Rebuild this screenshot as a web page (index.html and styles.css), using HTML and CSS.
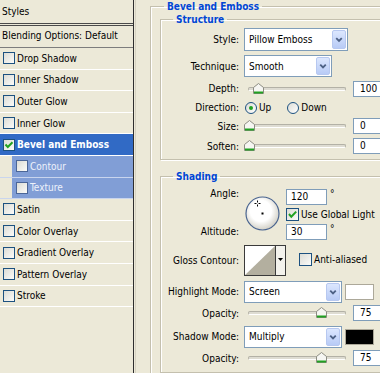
FILE: index.html
```html
<!DOCTYPE html>
<html lang="en">

<head>
    <meta charset="UTF-8">
    <title>Layer Style - Bevel and Emboss</title>
    <link rel="stylesheet" href="styles.css">
</head>

<body>
    <div class="dialog">
        <div class="styles-panel">
            <div class="panel-title">Styles</div>
            <div class="panel-blend">Blending Options: Default</div>
            <div class="panel-item"><span class="cb"></span>Drop Shadow</div>
            <div class="panel-item"><span class="cb"></span>Inner Shadow</div>
            <div class="panel-item"><span class="cb"></span>Outer Glow</div>
            <div class="panel-item"><span class="cb"></span>Inner Glow</div>
            <div class="panel-item selected">
                <span class="cb"><svg width="10" height="10" viewBox="0 0 10 10"><path d="M1.5 4.5 3.8 7 8.5 2.2" fill="none" stroke="#21a121" stroke-width="2"/></svg></span>Bevel and Emboss
            </div>
            <div class="panel-item sub"><span class="cb"></span>Contour</div>
            <div class="panel-item sub"><span class="cb"></span>Texture</div>
            <div class="panel-item"><span class="cb"></span>Satin</div>
            <div class="panel-item"><span class="cb"></span>Color Overlay</div>
            <div class="panel-item"><span class="cb"></span>Gradient Overlay</div>
            <div class="panel-item"><span class="cb"></span>Pattern Overlay</div>
            <div class="panel-item"><span class="cb"></span>Stroke</div>
        </div>

        <div class="options">
            <fieldset class="group outer">
                <legend>Bevel and Emboss</legend>

                <fieldset class="group inner structure">
                    <legend>Structure</legend>
                    <div class="row r-style">
                        <span class="label">Style:</span>
                        <div class="select w-style"><span>Pillow Emboss</span><span class="drop"><svg width="13" height="19" viewBox="0 0 13 19"><path d="M3.5 8 6.5 11 9.5 8" fill="none" stroke="#4d6185" stroke-width="2"/></svg></span></div>
                    </div>
                    <div class="row r-tech">
                        <span class="label">Technique:</span>
                        <div class="select w-tech"><span>Smooth</span><span class="drop"><svg width="13" height="18" viewBox="0 0 13 18"><path d="M3.5 7.5 6.5 10.5 9.5 7.5" fill="none" stroke="#4d6185" stroke-width="2"/></svg></span></div>
                    </div>
                    <div class="row r-slide">
                        <span class="label">Depth:</span>
                        <div class="slider"><div class="track"><svg class="thumb" style="left: 10%" width="11" height="11" viewBox="0 0 11 11"><path d="M0.5 4.5 5.5 0.5 10.5 4.5V10.5H0.5Z" fill="#f6f6f2" stroke="#8c8c82"/><path d="M1 9.5H10" stroke="#21a121" stroke-width="2"/></svg></div></div>
                        <span class="field num">100</span>
                    </div>
                    <div class="row r-dir">
                        <span class="label">Direction:</span>
                        <div class="radios">
                            <span class="opt"><span class="radio on"></span>Up</span>
                            <span class="opt"><span class="radio"></span>Down</span>
                        </div>
                    </div>
                    <div class="row r-size">
                        <span class="label">Size:</span>
                        <div class="slider"><div class="track"><svg class="thumb" style="left: 0%" width="11" height="11" viewBox="0 0 11 11"><path d="M0.5 4.5 5.5 0.5 10.5 4.5V10.5H0.5Z" fill="#f6f6f2" stroke="#8c8c82"/><path d="M1 9.5H10" stroke="#21a121" stroke-width="2"/></svg></div></div>
                        <span class="field num">0</span>
                    </div>
                    <div class="row r-soften">
                        <span class="label">Soften:</span>
                        <div class="slider"><div class="track"><svg class="thumb" style="left: 0%" width="11" height="11" viewBox="0 0 11 11"><path d="M0.5 4.5 5.5 0.5 10.5 4.5V10.5H0.5Z" fill="#f6f6f2" stroke="#8c8c82"/><path d="M1 9.5H10" stroke="#21a121" stroke-width="2"/></svg></div></div>
                        <span class="field num">0</span>
                    </div>
                </fieldset>

                <fieldset class="group inner shading">
                    <legend>Shading</legend>
                    <div class="angle-block">
                        <div class="angle-labels">
                            <span>Angle:</span>
                            <span>Altitude:</span>
                        </div>
                        <svg class="dial" width="35" height="35" viewBox="0 0 35 35">
                            <defs>
                                <radialGradient id="dial-fill" cx="45%" cy="42%" r="58%">
                                    <stop offset="0.55" stop-color="#ffffff"/>
                                    <stop offset="1" stop-color="#d2d0c6"/>
                                </radialGradient>
                            </defs>
                            <circle cx="17.5" cy="17.5" r="16.5" fill="url(#dial-fill)" stroke="#4a6590" stroke-width="1.2"/>
                            <path d="M9.5 7.5H11.5M13.5 7.5H15.5M12.5 4.5V6.5M12.5 8.5V10.5" stroke="#000" stroke-width="1"/>
                            <rect x="16.5" y="16.5" width="2" height="2" fill="#000"/>
                        </svg>
                        <div class="angle-fields">
                            <div class="field-line"><span class="field angle">120</span><span class="deg">°</span></div>
                            <div class="check-line"><span class="cb big"><svg width="11" height="11" viewBox="0 0 11 11"><path d="M2 5 4.3 7.8 9.2 2.6" fill="none" stroke="#21a121" stroke-width="2"/></svg></span>Use Global Light</div>
                            <div class="field-line"><span class="field angle">30</span><span class="deg">°</span></div>
                        </div>
                    </div>
                    <div class="row r-gloss">
                        <span class="label">Gloss Contour:</span>
                        <svg class="contour" width="42" height="31" viewBox="0 0 42 31">
                            <rect x="0.5" y="0.5" width="41" height="30" fill="#fff" stroke="#3a3a3a"/>
                            <polygon points="1,30 31,1 31,30" fill="#b3af9f"/>
                            <rect x="31" y="1" width="10" height="29" fill="#f3f2ec"/>
                            <path d="M31.5 1V30" stroke="#3a3a3a"/>
                            <polygon points="34,13 39,13 36.5,16" fill="#000"/>
                        </svg>
                        <span class="opt aa"><span class="cb big"></span>Anti-aliased</span>
                    </div>
                    <div class="row r-mode">
                        <span class="label">Highlight Mode:</span>
                        <div class="select w-mode"><span>Screen</span><span class="drop"><svg width="13" height="18" viewBox="0 0 13 18"><path d="M3.5 7.5 6.5 10.5 9.5 7.5" fill="none" stroke="#4d6185" stroke-width="2"/></svg></span></div>
                        <span class="swatch white"></span>
                    </div>
                    <div class="row r-opacity">
                        <span class="label">Opacity:</span>
                        <div class="slider"><div class="track"><svg class="thumb" style="left: 75%" width="11" height="11" viewBox="0 0 11 11"><path d="M0.5 4.5 5.5 0.5 10.5 4.5V10.5H0.5Z" fill="#f6f6f2" stroke="#8c8c82"/><path d="M1 9.5H10" stroke="#21a121" stroke-width="2"/></svg></div></div>
                        <span class="field num">75</span>
                    </div>
                    <div class="row r-mode r-shadow">
                        <span class="label">Shadow Mode:</span>
                        <div class="select w-mode"><span>Multiply</span><span class="drop"><svg width="13" height="18" viewBox="0 0 13 18"><path d="M3.5 7.5 6.5 10.5 9.5 7.5" fill="none" stroke="#4d6185" stroke-width="2"/></svg></span></div>
                        <span class="swatch black"></span>
                    </div>
                    <div class="row r-opacity">
                        <span class="label">Opacity:</span>
                        <div class="slider"><div class="track"><svg class="thumb" style="left: 75%" width="11" height="11" viewBox="0 0 11 11"><path d="M0.5 4.5 5.5 0.5 10.5 4.5V10.5H0.5Z" fill="#f6f6f2" stroke="#8c8c82"/><path d="M1 9.5H10" stroke="#21a121" stroke-width="2"/></svg></div></div>
                        <span class="field num">75</span>
                    </div>
                </fieldset>
            </fieldset>
        </div>
    </div>
</body>

</html>
```

FILE: styles.css
```css
body {
    margin: 0;
    background: #ece9d8;
    font-family: "DejaVu Sans Condensed", "Liberation Sans", sans-serif;
    font-size: 10px;
    color: #000;
    overflow: hidden;
}

.dialog {
    display: flex;
    width: 420px;
    height: 373px;
}

/* left list */
.styles-panel {
    width: 133px;
    flex: none;
    border-right: 1px solid #2e2e2e;
}

.panel-title {
    height: 23px;
    line-height: 23px;
    padding-left: 2px;
    border-bottom: 3px double #4a4a4a;
}

.panel-blend {
    height: 21px;
    line-height: 19px;
    padding-left: 2px;
    border-bottom: 1px solid #7d7d7d;
}

.panel-item {
    display: flex;
    align-items: center;
    gap: 2px;
    height: 20.6px;
    padding-left: 3px;
    border-bottom: 1px solid #fff;
}

.panel-item.selected {
    background: #316ac5;
    color: #fff;
    font-weight: bold;
}

.panel-item.sub {
    padding-left: 16px;
    background: linear-gradient(to right, #ece9d8 12px, #819ed6 12px);
    border-bottom-color: #c9d5ee;
    color: #eef2fb;
}

.cb {
    width: 12px;
    height: 12px;
    box-sizing: border-box;
    flex: none;
    border: 1px solid #1c5180;
    background: linear-gradient(135deg, #dcdcd5, #fbfbf9);
    display: inline-flex;
    align-items: center;
    justify-content: center;
}

.cb.big {
    width: 13px;
    height: 13px;
}

.sub .cb {
    border-color: #4b6698;
}

/* right side */
.options {
    flex: none;
    width: 270px;
    margin-left: 1px;
    border-left: 1px solid #d6d2c2;
    padding-left: 14px;
}

.group {
    margin: 0;
    min-width: 0;
    border: 1px solid #c4c0ae;
    box-shadow: inset 1px 1px 0 #fff, 1px 1px 0 #fff;
}

.group legend {
    padding: 0 3px;
    line-height: 13px;
    font-weight: bold;
    color: #0046d5;
}

.outer {
    padding: 0 0 0 9px;
}

.outer > legend {
    margin-left: 4px;
}

.inner {
    padding: 2px 0 4px 4px;
}

.inner > legend {
    margin-left: 8px;
}

.structure {
    padding-bottom: 5px;
}

.shading {
    margin-top: 10px;
    padding-top: 5px;
    padding-bottom: 6px;
}

.row {
    display: flex;
    align-items: center;
}

.label {
    width: 74px;
    flex: none;
    margin-right: 5px;
    text-align: right;
}

.r-style { height: 23px; }
.r-tech { height: 22px; margin-top: 4px; }
.r-slide { height: 17px; margin-top: 3px; }
.r-dir { height: 21px; }
.r-size { height: 16px; }
.r-soften { height: 16px; margin-top: 4px; }

/* dropdowns */
.select {
    display: flex;
    align-items: center;
    justify-content: space-between;
    box-sizing: border-box;
    height: 100%;
    padding: 1px 1px 1px 4px;
    background: #fff;
    border: 1px solid #7f9db9;
}

.w-style { width: 104px; }
.w-tech { width: 88px; }
.w-mode { width: 98px; height: 22px; }

.drop {
    width: 14px;
    height: 100%;
    box-sizing: border-box;
    display: flex;
    align-items: center;
    justify-content: center;
    background: linear-gradient(#dce7fe, #b8cbf6);
    border: 1px solid #b7c8f0;
    border-radius: 2px;
}

/* sliders */
.slider {
    width: 104px;
    flex: none;
}

.track {
    position: relative;
    height: 2px;
    margin: 0 2px 0 4px;
    background: #dedcd2;
    border: 1px solid #b3b1a6;
    border-bottom-color: #fff;
    border-radius: 2px;
}

.thumb {
    position: absolute;
    top: -5px;
    margin-left: -5.5px;
}

.field {
    box-sizing: border-box;
    height: 16px;
    line-height: 14px;
    background: #fff;
    border: 1px solid #7f9db9;
}

.num {
    width: 40px;
    margin-left: 5px;
    padding-left: 6px;
}

/* direction radios */
.radios {
    display: flex;
    gap: 16px;
    padding-left: 1px;
}

.opt {
    display: flex;
    align-items: center;
    gap: 2px;
}

.radio {
    width: 12px;
    height: 12px;
    box-sizing: border-box;
    border: 1px solid #1c5180;
    border-radius: 50%;
    background: linear-gradient(135deg, #dcdcd5, #fff);
    display: inline-flex;
    align-items: center;
    justify-content: center;
}

.radio.on::after {
    content: "";
    width: 4px;
    height: 4px;
    border-radius: 50%;
    background: #21a121;
}

/* shading */
.angle-block {
    display: flex;
    height: 52px;
}

.angle-labels {
    width: 74px;
    flex: none;
    display: flex;
    flex-direction: column;
    justify-content: space-between;
    text-align: right;
    padding: 0 0 2px;
    line-height: 12px;
    box-sizing: border-box;
}

.dial {
    flex: none;
    margin: 8px 0 0 6px;
}

.angle-fields {
    margin-left: 6px;
    padding-top: 1px;
}

.field-line {
    display: flex;
    align-items: flex-start;
}

.angle {
    width: 41px;
    padding-left: 4px;
}

.deg {
    margin-left: 3px;
    line-height: 9px;
}

.check-line {
    display: flex;
    align-items: center;
    gap: 2px;
    height: 15px;
    margin: 2px 0;
}

.r-gloss {
    height: 31px;
    margin-top: 5px;
}

.contour {
    flex: none;
}

.aa {
    margin-left: 13px;
    margin-bottom: 3px;
}

.r-mode {
    height: 23px;
    margin-top: 4px;
}

.r-opacity {
    height: 16px;
    margin-top: 2px;
}

.swatch {
    width: 29px;
    height: 16px;
    box-sizing: border-box;
    margin-left: 3px;
    border: 1px solid #aca899;
}

.swatch.white { background: #fff; }
.swatch.black { background: #000; }
```
